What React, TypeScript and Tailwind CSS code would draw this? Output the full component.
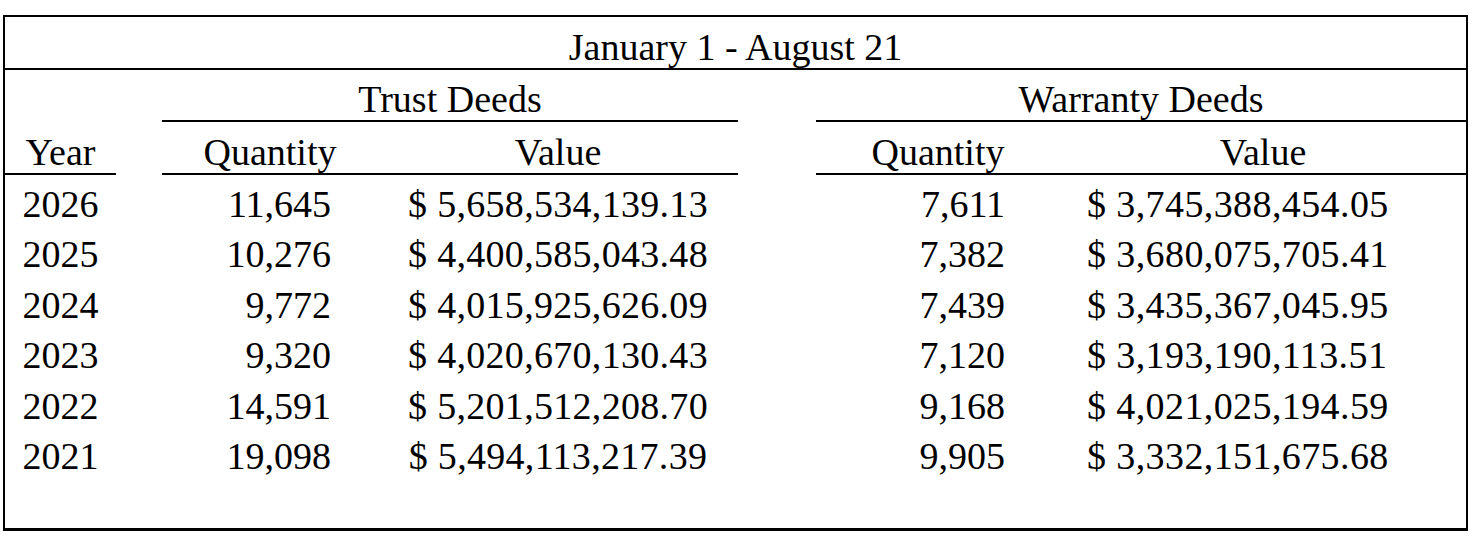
import React from "react";

const rows: string[][] = [
  ["2026", "11,645", "$ 5,658,534,139.13", "7,611", "$ 3,745,388,454.05"],
  ["2025", "10,276", "$ 4,400,585,043.48", "7,382", "$ 3,680,075,705.41"],
  ["2024", "9,772", "$ 4,015,925,626.09", "7,439", "$ 3,435,367,045.95"],
  ["2023", "9,320", "$ 4,020,670,130.43", "7,120", "$ 3,193,190,113.51"],
  ["2022", "14,591", "$ 5,201,512,208.70", "9,168", "$ 4,021,025,194.59"],
  ["2021", "19,098", "$ 5,494,113,217.39", "9,905", "$ 3,332,151,675.68"],
];

export default function App() {
  return (
    <div className="w-[1480px] h-[554px] bg-white pt-[15px] pl-[3px] font-['Liberation_Serif','Times_New_Roman',serif] text-[38px] text-black">
      <div className="w-[1465px] h-[516px] border-2 border-b-[3px] border-black">
        <div className="h-[53px] border-b-2 border-black text-center leading-[42px] pt-[9px]">
          January 1 - August 21
        </div>
        <div className="grid grid-cols-[111px_46px_216px_360px_78px_244px_406px]">
          <div className="col-start-3 col-span-2 h-[52px] border-b-2 border-black text-center leading-[42px] pt-[8px]">
            Trust Deeds
          </div>
          <div className="col-start-6 col-span-2 h-[52px] border-b-2 border-black text-center leading-[42px] pt-[8px]">
            Warranty Deeds
          </div>
          <div className="col-start-1 h-[53px] border-b-2 border-black text-center leading-[42px] pt-[9px]">
            Year
          </div>
          <div className="col-start-3 col-span-2 h-[53px] border-b-2 border-black grid grid-cols-[216px_360px] leading-[42px] pt-[9px]">
            <div className="text-center">Quantity</div>
            <div className="text-center">Value</div>
          </div>
          <div className="col-start-6 col-span-2 h-[53px] border-b-2 border-black grid grid-cols-[244px_406px] leading-[42px] pt-[9px]">
            <div className="text-center">Quantity</div>
            <div className="text-center">Value</div>
          </div>
        </div>
        <div className="grid grid-cols-[111px_46px_216px_360px_78px_244px_406px] auto-rows-[50.4px] leading-[50px] pt-[4px]">
          {rows.map((r) => (
            <React.Fragment key={r[0]}>
              <div className="col-start-1 text-center">{r[0]}</div>
              <div className="col-start-3 text-right pr-[47px]">{r[1]}</div>
              <div className="col-start-4 text-center tracking-[0.3px]">{r[2]}</div>
              <div className="col-start-6 text-right pr-[55px]">{r[3]}</div>
              <div className="col-start-7 text-left pl-[27px] tracking-[0.4px]">{r[4]}</div>
            </React.Fragment>
          ))}
        </div>
      </div>
    </div>
  );
}
